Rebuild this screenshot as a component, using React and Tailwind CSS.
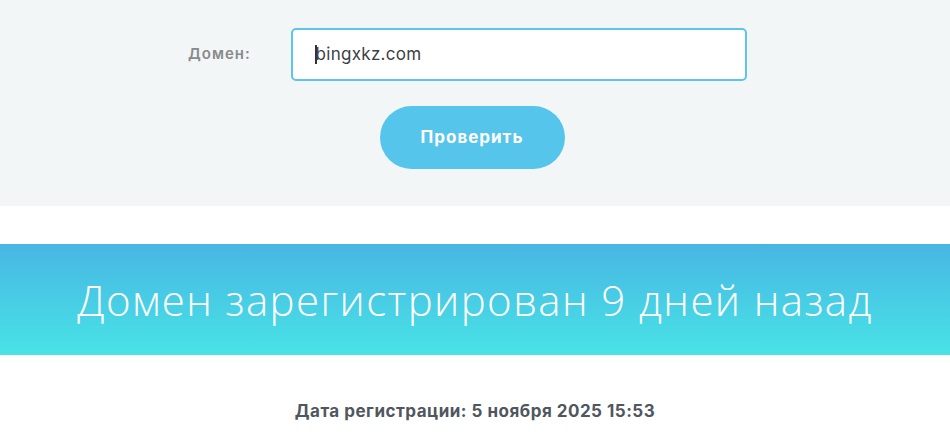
import React from 'react';

export default function App() {
  return (
    <div className="min-h-screen bg-white" style={{ fontFamily: 'Inter, "Open Sans", sans-serif' }}>
      {/* Form */}
      <div className="bg-[#f3f6f7] h-[206px] pt-[28px]">
        <div className="flex items-center pl-[188px]">
          <label className="w-[103px] text-[15px] font-semibold tracking-[1px] text-[#8a8a8a]">Домен:</label>
          <div className="w-[456px] h-[53px] bg-white border-2 border-[#5fc3ec] rounded-[5px] flex items-center pl-[22px]">
            <span className="w-[1.5px] h-[19px] bg-[#333]"></span>
            <span className="text-[17px] tracking-[0.3px] text-[#3a3f45] -ml-[1px]">bingxkz.com</span>
          </div>
        </div>
        <div className="flex justify-center pr-[6px] mt-[25px]">
          <button className="w-[185px] h-[63px] rounded-full bg-[#56c5ec] text-white text-[17px] tracking-[1px] font-bold">
            Проверить
          </button>
        </div>
      </div>

      {/* Result banner */}
      <div className="mt-[38px] h-[111px] bg-gradient-to-b from-[#48b6e3] to-[#48e3e6] flex items-center justify-center">
        <h1 className="text-white text-[42px] tracking-[1.4px] font-light" style={{ fontFamily: '"Open Sans", sans-serif' }}>
          Домен зарегистрирован 9 дней назад
        </h1>
      </div>

      <div className="pt-[44px] text-center text-[17px] tracking-[0.5px] font-bold text-[#50565e]">
        Дата регистрации: 5 ноября 2025 15:53
      </div>
    </div>
  );
}
